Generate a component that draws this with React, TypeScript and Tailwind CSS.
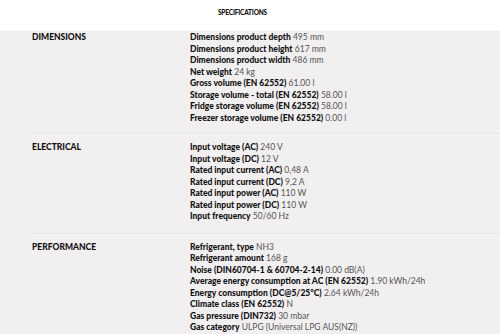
import React from "react";

interface ISpec {
  name: string;
  value: string;
}

interface ISection {
  title: string;
  specs: ISpec[];
}

const sections: ISection[] = [
  {
    title: "DIMENSIONS",
    specs: [
      { name: "Dimensions product depth", value: "495 mm" },
      { name: "Dimensions product height", value: "617 mm" },
      { name: "Dimensions product width", value: "486 mm" },
      { name: "Net weight", value: "24 kg" },
      { name: "Gross volume (EN 62552)", value: "61.00 l" },
      { name: "Storage volume - total (EN 62552)", value: "58.00 l" },
      { name: "Fridge storage volume (EN 62552)", value: "58.00 l" },
      { name: "Freezer storage volume (EN 62552)", value: "0.00 l" },
    ],
  },
  {
    title: "ELECTRICAL",
    specs: [
      { name: "Input voltage (AC)", value: "240 V" },
      { name: "Input voltage (DC)", value: "12 V" },
      { name: "Rated input current (AC)", value: "0,48 A" },
      { name: "Rated input current (DC)", value: "9,2 A" },
      { name: "Rated input power (AC)", value: "110 W" },
      { name: "Rated input power (DC)", value: "110 W" },
      { name: "Input frequency", value: "50/60 Hz" },
    ],
  },
  {
    title: "PERFORMANCE",
    specs: [
      { name: "Refrigerant, type", value: "NH3" },
      { name: "Refrigerant amount", value: "168 g" },
      { name: "Noise (DIN60704-1 & 60704-2-14)", value: "0.00 dB(A)" },
      { name: "Average energy consumption at AC (EN 62552)", value: "1.90 kWh/24h" },
      { name: "Energy consumption (DC@5/25°C)", value: "2.64 kWh/24h" },
      { name: "Climate class (EN 62552)", value: "N" },
      { name: "Gas pressure (DIN732)", value: "30 mbar" },
      { name: "Gas category", value: "ULPG (Universal LPG AUS(NZ))" },
    ],
  },
];

const App = () => {
  return (
    <div
      className="w-[500px] h-[334px] overflow-hidden bg-white"
      style={{ fontFamily: "Lato, 'Liberation Sans', sans-serif" }}
    >
      <div className="h-[31px] flex items-center justify-center pb-[5px]">
        <h1 className="text-[6.5px] font-black text-[#111] tracking-tight ml-[-15px]">
          SPECIFICATIONS
        </h1>
      </div>
      <div className="bg-[#f2eff0] h-full">
        {sections.map((section, i) => (
          <div key={section.title}>
            {i > 0 && (
              <div className="ml-8 border-t border-[#e5e1e2] border-b-[#f8f6f7] border-b h-[2px]" />
            )}
            <div
              className={`flex pl-8 ${i === 0 ? "pt-px pb-[9px]" : "pt-[7px] pb-[10px]"}`}
            >
              <div className="w-[158px] text-[8.5px] font-black text-[#111] leading-[11.5px]">
                {section.title}
              </div>
              <div className="flex flex-col text-[8.5px] leading-[11.5px]">
                {section.specs.map((spec) => (
                  <div key={spec.name} className="whitespace-nowrap">
                    <span className="font-black text-[#111]">{spec.name}</span>{" "}
                    <span className="text-[#555]">{spec.value}</span>
                  </div>
                ))}
              </div>
            </div>
          </div>
        ))}
      </div>
    </div>
  );
};

export default App;
